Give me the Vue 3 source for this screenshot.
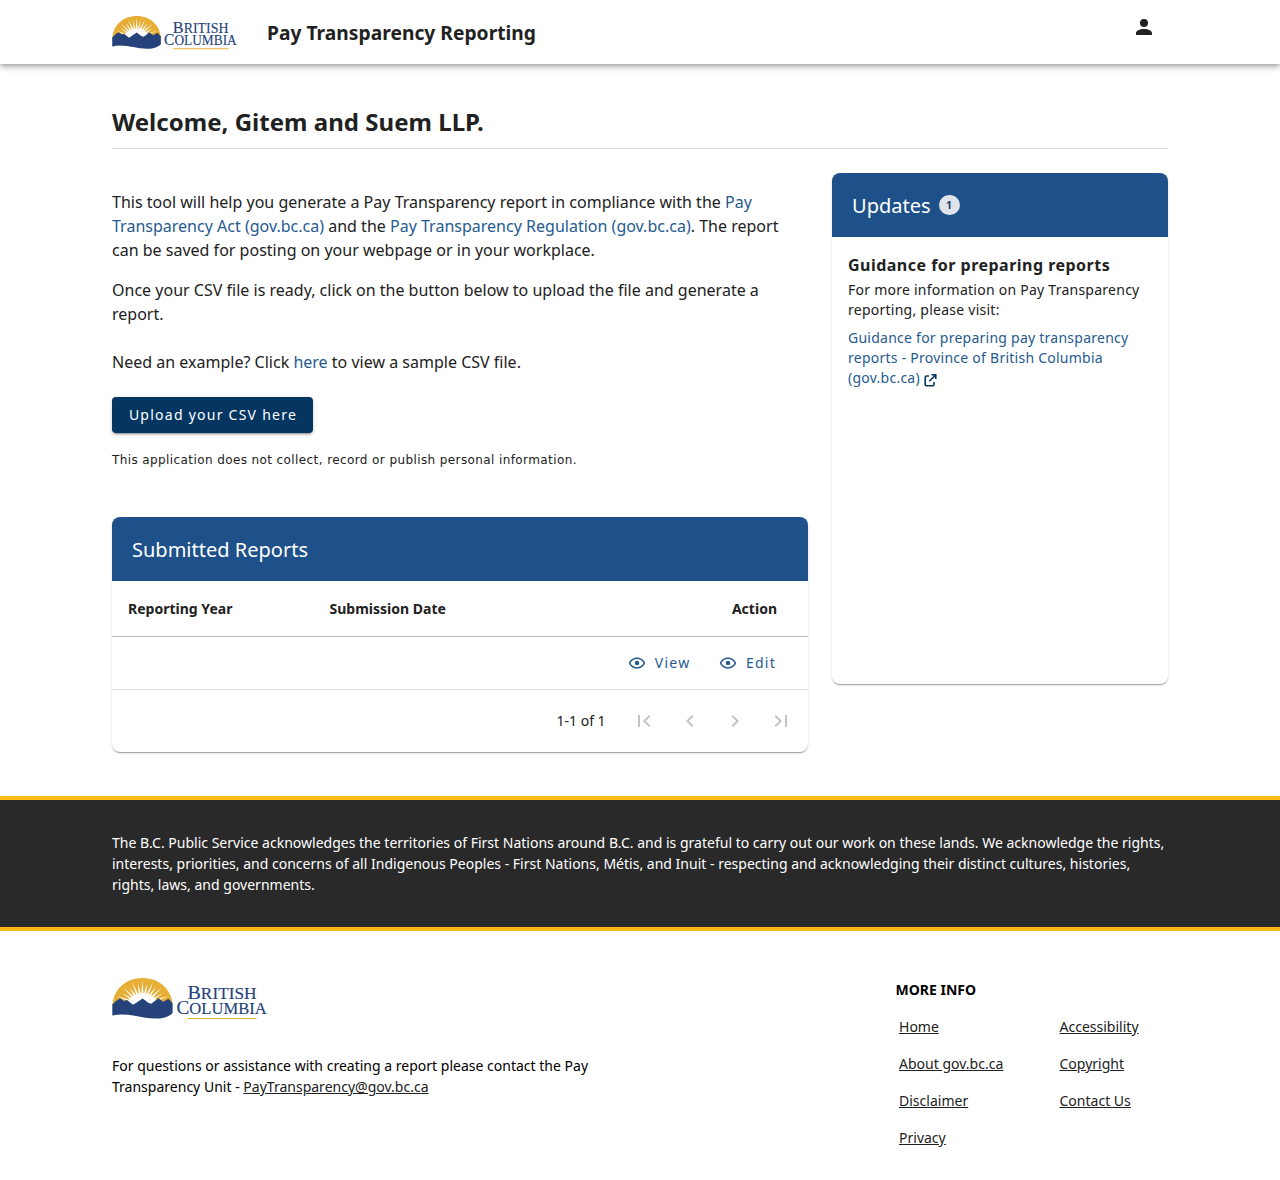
<script setup>
import { h } from 'vue'

const moreInfo = [
  ['Home', 'Accessibility'],
  ['About gov.bc.ca', 'Copyright'],
  ['Disclaimer', 'Contact Us'],
  ['Privacy', ''],
]

const actions = ['View', 'Edit']

const pagerIcons = [
  'M18.41,16.59L13.82,12L18.41,7.41L17,6L11,12L17,18L18.41,16.59M6,6H8V18H6V6Z',
  'M15.41,16.58L10.83,12L15.41,7.41L14,6L8,12L14,18L15.41,16.58Z',
  'M8.59,16.58L13.17,12L8.59,7.41L10,6L16,12L10,18L8.59,16.58Z',
  'M5.59,7.41L10.18,12L5.59,16.59L7,18L13,12L7,6L5.59,7.41M16,6H18V18H16V6Z',
]

const eye =
  'M12,9A3,3 0 0,1 15,12A3,3 0 0,1 12,15A3,3 0 0,1 9,12A3,3 0 0,1 12,9M12,4.5C17,4.5 21.27,7.61 23,12C21.27,16.39 17,19.5 12,19.5C7,19.5 2.73,16.39 1,12C2.73,7.61 7,4.5 12,4.5M3.18,12C4.83,15.36 8.24,17.5 12,17.5C15.76,17.5 19.17,15.36 20.82,12C19.17,8.64 15.76,6.5 12,6.5C8.24,6.5 4.83,8.64 3.18,12Z'

// White wedges that separate the sun's rays, fanned around its centre.
const gaps = Array.from({ length: 15 }, (_, i) => {
  const a = Math.PI + 0.2 + (i * (Math.PI - 0.4)) / 14
  const p = (r, t) => `${(30.5 + r * 1.06 * Math.cos(t)).toFixed(2)},${(29 + r * Math.sin(t)).toFixed(2)}`
  return `${p(13, a - 0.075)} ${p(i % 2 ? 26 : 23, a)} ${p(13, a + 0.075)}`
})

const word = (x, y, length, first, rest) =>
  h('text', { x, y, textLength: length, lengthAdjust: 'spacingAndGlyphs', fill: '#25427a', stroke: '#25427a', 'stroke-width': 0.15, 'font-family': '"Liberation Serif", serif', 'font-size': 19.5 }, [
    first,
    h('tspan', { 'font-size': 16.8 }, rest),
  ])

const BcLogo = () =>
  h('svg', { viewBox: '0 0 155 44', role: 'img', 'aria-label': 'British Columbia' }, [
    h('path', { d: 'M.4 29C1 12 14 1 30.5 1S60 12 60.6 29Z', fill: '#e6ae35' }),
    h('ellipse', { cx: 30.5, cy: 29, rx: 15, ry: 13, fill: '#fff' }),
    ...gaps.map((points) => h('polygon', { points, fill: '#fff' })),
    h('path', {
      d: 'M.3 27.5L4 24l4-2.8 4 2.8 3-1 6 4.8 3-1.8 6.6-4.5 5.7 4.3 3 .9 7-5.4 5 3.5 5-3 4.3 4.5V36C57 39.5 52 41.8 43 41.6 29 41.3 15 35.3.3 38.6Z',
      fill: '#25427a',
    }),
    word(75.5, 21.6, 69, 'B', 'RITISH'),
    word(64.5, 36.7, 90.2, 'C', 'OLUMBIA'),
    h('path', { d: 'M76 41.5H144.5', stroke: '#e6ae35', 'stroke-width': 1.2 }),
  ])
</script>

<template>
  <div class="page">
    <header class="topbar">
      <BcLogo class="logo-top" />
      <div class="app-title">Pay Transparency Reporting</div>
      <svg class="account" viewBox="0 0 24 24"><path d="M12,4A4,4 0 0,1 16,8A4,4 0 0,1 12,12A4,4 0 0,1 8,8A4,4 0 0,1 12,4M12,14C16.42,14 20,15.79 20,18V20H4V18C4,15.79 7.58,14 12,14Z" /></svg>
    </header>

    <main>
      <h1>Welcome, Gitem and Suem LLP.</h1>
      <div class="columns">
        <div class="left">
          <p>This tool will help you generate a Pay Transparency report in compliance with the <a>Pay Transparency Act (gov.bc.ca)</a> and the <a>Pay Transparency Regulation (gov.bc.ca)</a>. The report can be saved for posting on your webpage or in your workplace.</p>
          <p class="ready">Once your CSV file is ready, click on the button below to upload the file and generate a report.</p>
          <p class="example">Need an example? Click <a>here</a> to view a sample CSV file.</p>
          <button class="upload">Upload your CSV here</button>
          <div class="privacy">This application does not collect, record or publish personal information.</div>

          <section class="card reports">
            <h2>Submitted Reports</h2>
            <div class="row head">
              <span class="year">Reporting Year</span>
              <span>Submission Date</span>
              <span class="action">Action</span>
            </div>
            <div class="row body">
              <span v-for="a in actions" :key="a" class="act">
                <svg viewBox="0 0 24 24"><path :d="eye" /></svg>{{ a }}
              </span>
            </div>
            <div class="pager">
              <span>1-1 of 1</span>
              <svg v-for="d in pagerIcons" :key="d" viewBox="0 0 24 24"><path :d="d" /></svg>
            </div>
          </section>
        </div>

        <section class="card updates">
          <h2>Updates <span class="badge">1</span></h2>
          <div class="news">
            <h3>Guidance for preparing reports</h3>
            <p>For more information on Pay Transparency reporting, please visit:</p>
            <p class="guide"><a>Guidance for preparing pay transparency reports - Province of British Columbia (gov.bc.ca)</a> <svg viewBox="0 0 14 14"><path d="M5 3H2.6Q1.2 3 1.2 4.4V11.4Q1.2 12.8 2.6 12.8H8.6Q10 12.8 10 11.4V9M7.5 1.8H11.8V6.1M11.5 2.1L5.3 8.3" /></svg></p>
          </div>
        </section>
      </div>
    </main>

    <section class="land">
      <p>The B.C. Public Service acknowledges the territories of First Nations around B.C. and is grateful to carry out our work on these lands. We acknowledge the rights, interests, priorities, and concerns of all Indigenous Peoples - First Nations, Métis, and Inuit - respecting and acknowledging their distinct cultures, histories, rights, laws, and governments.</p>
    </section>

    <footer>
      <div class="contact">
        <BcLogo class="logo-bottom" />
        <p>For questions or assistance with creating a report please contact the Pay Transparency Unit - <a>PayTransparency@gov.bc.ca</a></p>
      </div>
      <nav>
        <h4>MORE INFO</h4>
        <div v-for="pair in moreInfo" :key="pair[0]" class="links">
          <span class="first"><a>{{ pair[0] }}</a></span>
          <a>{{ pair[1] }}</a>
        </div>
      </nav>
    </footer>
  </div>
</template>

<style>
body {
  margin: 0;
  background: #fff;
}
</style>

<style scoped>
.page {
  height: 1180px;
  overflow: hidden;
  font: 16px/24px "Noto Sans", sans-serif;
  letter-spacing: .008px;
  color: #212121;
}
h1, h2, h3, h4, p {
  margin: 0;
}
.topbar {
  box-sizing: border-box;
  height: 64px;
  padding: 0 112px;
  display: flex;
  align-items: center;
  box-shadow: 0 2px 4px -1px rgba(0, 0, 0, .2), 0 4px 5px rgba(0, 0, 0, .14), 0 1px 10px rgba(0, 0, 0, .12);
}
.logo-top {
  width: 125px;
  height: 36px;
  margin-top: 1px;
}
.app-title {
  margin-left: 30px;
  padding-top: 2px;
  font-size: 19.2px;
  font-weight: 700;
  letter-spacing: .03px;
}
.account {
  width: 24px;
  height: 24px;
  margin: 0 12px 10px auto;
  fill: #212121;
}
main {
  padding: 40px 112px 0;
}
h1 {
  height: 44px;
  border-bottom: 1px solid #dedede;
  font-size: 24px;
  line-height: 36px;
  letter-spacing: .03px;
}
.columns {
  display: flex;
  gap: 24px;
  padding-top: 24px;
}
.left {
  width: 696px;
  padding-top: 17px;
}
.left a, .guide a {
  color: #255a90;
}
.ready {
  margin-top: 16px;
}
.example {
  margin-top: 24px;
}
.upload {
  display: block;
  width: 201px;
  height: 36px;
  margin-top: 23px;
  padding: 0 0 2px 1px;
  border: 0;
  border-radius: 4px;
  background: #053662;
  color: #fff;
  font: 14px "Noto Sans", sans-serif;
  letter-spacing: 1.25px;
  box-shadow: 0 3px 1px -2px rgba(0, 0, 0, .2), 0 2px 2px rgba(0, 0, 0, .14), 0 1px 5px rgba(0, 0, 0, .12);
}
.privacy {
  margin-top: 17px;
  font: 12px/20px "DejaVu Sans", sans-serif;
  letter-spacing: .4px;
}
.card {
  border-radius: 8px;
  overflow: hidden;
  box-shadow: 0 2px 1px -1px rgba(0, 0, 0, .2), 0 1px 1px rgba(0, 0, 0, .14), 0 1px 3px rgba(0, 0, 0, .12);
}
.card h2 {
  box-sizing: border-box;
  height: 64px;
  padding: 2px 0 0 20px;
  display: flex;
  align-items: center;
  background: #1e5189;
  color: #fff;
  font-size: 20px;
  font-weight: 400;
}
.reports {
  height: 235px;
  margin-top: 47px;
}
.row {
  box-sizing: border-box;
  display: flex;
  align-items: center;
  font-size: 14px;
}
.head {
  height: 56px;
  padding: 0 31px 0 16px;
  border-bottom: 1px solid #bcbcbc;
  font-weight: 700;
}
.year {
  width: 201.5px;
}
.action {
  margin-left: auto;
}
.body {
  height: 53px;
  padding-right: 32px;
  border-bottom: 1px solid #dedede;
  justify-content: flex-end;
  gap: 28.5px;
}
.act {
  display: flex;
  align-items: center;
  color: #255a90;
  letter-spacing: 1.25px;
}
.act svg {
  width: 18px;
  height: 18px;
  margin-right: 9px;
  fill: currentColor;
}
.pager {
  height: 62px;
  padding-right: 15px;
  display: flex;
  align-items: center;
  justify-content: flex-end;
  gap: 21.6px;
  font-size: 14px;
}
.pager span {
  margin-right: 5px;
}
.pager svg {
  width: 24px;
  height: 24px;
  fill: #c4c4c4;
}
.updates {
  width: 336px;
  height: 511px;
}
.badge {
  width: 21px;
  height: 20px;
  margin: -2px 0 0 8px;
  border-radius: 10px;
  background: #dfe4eb;
  color: #1a3b63;
  font-size: 10.5px;
  font-weight: 700;
  line-height: 20px;
  text-align: center;
}
.news {
  padding: 16px;
  font-size: 14px;
  line-height: 20px;
  letter-spacing: .25px;
}
.news h3 {
  height: 27px;
  font-size: 16px;
  line-height: 24px;
  letter-spacing: .48px;
}
.guide {
  margin-top: 8px;
}
.guide svg {
  width: 14px;
  height: 14px;
  vertical-align: -4px;
  fill: none;
  stroke: #053662;
  stroke-width: 1.6;
}
.land {
  box-sizing: border-box;
  height: 135px;
  margin-top: 44px;
  padding: 32px 112px;
  border-top: 4px solid #fcba19;
  border-bottom: 4px solid #fcba19;
  background: #292929;
  color: #fff;
  font-size: 14px;
  line-height: 21px;
}
footer {
  display: flex;
  justify-content: space-between;
  padding: 46px 112px 0;
  color: #000;
  font-size: 14px;
  line-height: 21px;
}
footer a {
  color: #212121;
  text-decoration: underline;
}
.contact {
  width: 512px;
}
.logo-bottom {
  display: block;
  width: 155px;
  height: 44px;
}
.contact p {
  margin-top: 34px;
}
nav {
  width: 272.5px;
}
h4 {
  padding-top: 2px;
  font-size: 14px;
}
.links {
  display: flex;
  margin-top: 16px;
  padding-left: 3.5px;
}
.first {
  width: 160.5px;
}
</style>
